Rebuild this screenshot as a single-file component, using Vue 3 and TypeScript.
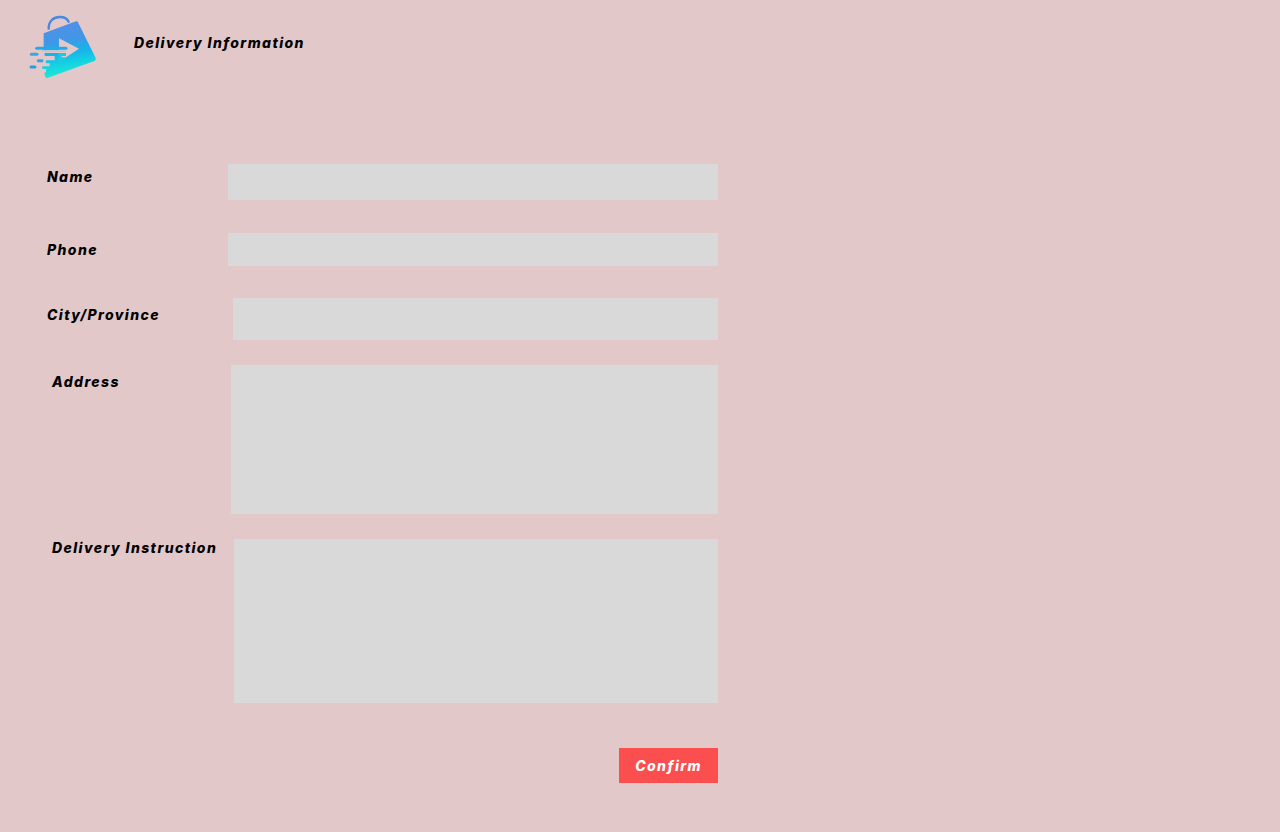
<script setup lang="ts">
import { reactive } from 'vue'

type FieldKey = 'name' | 'phone' | 'city' | 'address' | 'instruction'

interface Field {
  key: FieldKey
  label: string
  multiline: boolean
}

const fields: Field[] = [
  { key: 'name', label: 'Name', multiline: false },
  { key: 'phone', label: 'Phone', multiline: false },
  { key: 'city', label: 'City/Province', multiline: false },
  { key: 'address', label: 'Address', multiline: true },
  { key: 'instruction', label: 'Delivery Instruction', multiline: true },
]

const values = reactive<Record<FieldKey, string>>({
  name: '',
  phone: '',
  city: '',
  address: '',
  instruction: '',
})
</script>

<template>
  <div class="page">
    <header class="header">
      <svg class="logo" viewBox="0 0 270 225" aria-hidden="true">
        <defs>
          <linearGradient id="bag" gradientUnits="userSpaceOnUse" x1="125" y1="50" x2="150" y2="205">
            <stop offset="0" stop-color="#5290e6" />
            <stop offset="0.35" stop-color="#4296e7" />
            <stop offset="0.6" stop-color="#15b4ea" />
            <stop offset="0.8" stop-color="#14d2e2" />
            <stop offset="1" stop-color="#1ce6d8" />
          </linearGradient>
        </defs>
        <path d="M86 71C86 48 101 36 120 36c13 0 22 6 26 14" fill="none" stroke="#4688e4" stroke-width="7" stroke-linecap="round" />
        <path
          d="M71 85L168 49q4-1 6 3l53 107q2 6-4 9L82 219q-5 1-6-4l-3-8q0-5 5-6V192H68q-4-4 0-8h21v-9H79q-4-4 0-9h25V153H75q-4-4 0-9h42V135H71zM117 100l60 31-53 35v-14h-7z"
          fill="url(#bag)"
          fill-rule="evenodd"
        />
        <path d="M115 144h23v9h-14v4h12v8h-12v4h-9z" fill="#19cbe3" />
        <path d="M66 138h72" stroke="#8fcbe0" stroke-width="3" />
        <g stroke-width="9" stroke-linecap="round">
          <path d="M34 148h17" stroke="#36a8e6" />
          <path d="M55 167h11" stroke="#3aa1e5" />
          <path d="M33 186h12" stroke="#269ee6" />
          <path d="M50 130h88" stroke="#24aae8" />
        </g>
      </svg>
      <h1 class="title">Delivery Information</h1>
    </header>

    <form class="form" @submit.prevent>
      <div v-for="field in fields" :key="field.key" class="row" :class="field.key">
        <label class="label" :for="field.key">{{ field.label }}</label>
        <textarea v-if="field.multiline" :id="field.key" v-model="values[field.key]" class="control"></textarea>
        <input v-else :id="field.key" v-model="values[field.key]" class="control" type="text" />
      </div>
      <button class="confirm" type="submit">Confirm</button>
    </form>
  </div>
</template>

<style>
body {
  margin: 0;
  background: #e3c8c9;
}
</style>

<style scoped>
.page {
  min-height: 100vh;
  box-sizing: border-box;
  background: #e3c8c9;
  color: #000;
  font: italic 800 14px/18px Inter, "Liberation Sans", sans-serif;
  letter-spacing: 0.1em;
}

.header {
  display: flex;
  align-items: center;
  gap: 24px;
  padding: 5px 20px;
}

.logo {
  width: 90px;
  height: 75px;
}

.title {
  margin: 0;
  font: inherit;
}

.form {
  display: flex;
  flex-direction: column;
  max-width: 718px;
  padding-top: 79px;
}

.row {
  display: flex;
  align-items: flex-start;
  margin-bottom: 25px;
  padding-left: 52px;
}

.name,
.phone,
.city {
  padding-left: 47px;
}

.name {
  margin-bottom: 33px;
}

.phone {
  margin-bottom: 32px;
}

.label {
  flex: none;
  width: 181px;
  padding-top: 8px;
}

.name .label {
  padding-top: 4px;
}

.city .label {
  width: 186px;
}

.address .label {
  width: 179px;
}

.instruction .label {
  width: 182px;
  padding-top: 0;
}

.control {
  flex: 1;
  min-width: 0;
  box-sizing: border-box;
  margin: 0;
  padding: 8px;
  border: 0;
  border-radius: 0;
  background: #d9d9d9;
  color: inherit;
  font: inherit;
  letter-spacing: inherit;
  resize: none;
}

.name .control {
  height: 36px;
}

.phone .control {
  height: 33px;
}

.city .control {
  height: 42px;
}

.address .control {
  height: 149px;
}

.instruction .control {
  height: 164px;
}

.confirm {
  align-self: flex-end;
  margin: 20px 0 48px;
  padding: 9px 16px 8px;
  border: 0;
  background: #fb4e4e;
  color: #fff;
  font: inherit;
  letter-spacing: inherit;
  cursor: pointer;
}
</style>
